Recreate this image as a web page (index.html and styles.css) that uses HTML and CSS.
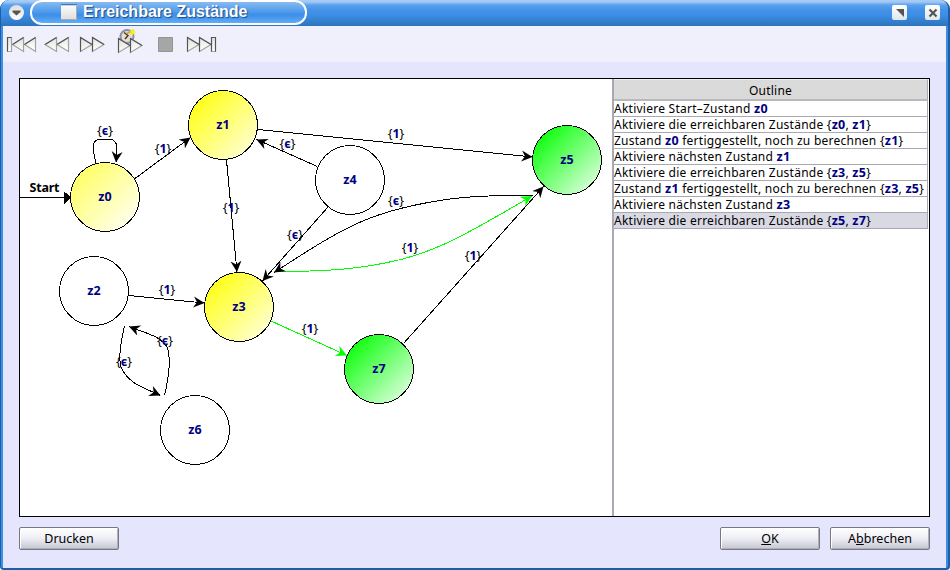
FILE: index.html
```html
<!DOCTYPE html>
<html lang="de">
<head>
<meta charset="utf-8">
<title>Erreichbare Zustände</title>
<link rel="stylesheet" href="styles.css">
</head>
<body>
<div class="window">
  <header class="titlebar">
    <span class="menu-button"><svg width="15" height="15"><path d="M3.5 5.5h8v1.5l-4 3.5-4-3.5z" fill="#555"/></svg></span>
    <div class="title-tab">
      <svg class="doc-icon" width="17" height="16"><defs><linearGradient id="doc" x2="0" y2="1"><stop stop-color="#fff"/><stop offset="1" stop-color="#ddd"/></linearGradient></defs><path d="M0 0h16v16H0z" fill="url(#doc)"/><path d="M0 0h16v1H0z" fill="#4b72ae"/><path d="M0 1h16v1H0z" fill="#c8d4e6"/><path d="M15.5 2v13.5H0" fill="none" stroke="#aaa"/></svg>
      <span class="title">Erreichbare Zustände</span>
    </div>
    <span class="win-button"><svg width="15" height="15"><path d="M4 4h8v8z" fill="#555"/></svg></span>
    <span class="win-button last"><svg width="15" height="15"><path d="M4.5 4.5l7 7M11.5 4.5l-7 7" stroke="#555" stroke-width="2.2"/></svg></span>
  </header>
  <main class="content">
    <div class="toolbar">
      <svg width="220" height="36" viewBox="0 26 220 36">
        <defs><linearGradient id="tri" x2="0.3" y2="1"><stop stop-color="#dedfd8"/><stop offset="1" stop-color="#fff"/></linearGradient></defs>
        <g fill="url(#tri)" stroke="#a2a2a2" stroke-width="1.2">
          <path d="M7.5 37.5h4v14h-4z"/><path d="M23.5 37.5v14l-11-7zM35.5 37.5v14l-11-7z"/>
          <path d="M56.500 37.500v14l-11.500-7zM68.500 37.500v14l-11.500-7z"/>
          <path d="M80.500 37.500v14l11.500-7zM92.500 37.500v14l11.500-7z"/>
        </g>
        <g fill="none" stroke="#555" stroke-width="1.1">
          <path d="M7.500 51.500v-14h4M12.500 44.500l11-7M24.500 44.500l11-7M45 44.500l11.500-7M57 44.500l11.500-7M80.500 51.500v-14l11.500 7M92.500 51.500v-14l11.500 7"/>
        </g>
        <circle cx="127" cy="36.500" r="6.500" fill="#e2dfd5" stroke="#8c8caa" stroke-width="2"/>
        <path d="M124 32.500l4 3-3 3.500" fill="none" stroke="#403820" stroke-width="1.4"/>
        <path d="M126.500 33.500l5-2" stroke="#d4a020" stroke-width="1.500"/>
        <path d="M132.500 29v6.500M129.500 32h6M130.500 30l4 4M134.500 30l-4 4" stroke="#f3ed20" stroke-width="1.200"/>
        <g fill="url(#tri)" stroke="#a2a2a2" stroke-width="1.2">
          <path d="M118.500 38.500v14l11.500-7zM130.500 38.500v14l11.500-7z"/>
          <path d="M187.500 37.500v14l11.500-7zM199.500 37.500v14l11.500-7z"/><path d="M211.500 37.500h4v14h-4z"/>
        </g>
        <g fill="none" stroke="#555" stroke-width="1.1"><path d="M118.500 52.500v-14l11.500 7M130.500 52.500v-14l11.500 7M187.500 51.500v-14l11.500 7M199.500 51.500v-14l11.500 7M211.500 51.500v-14h4v14"/></g>
        <path d="M158.500 37.500h14v14h-14z" fill="#a6a6a6" stroke="#949494"/>
      </svg>
    </div>
    <div class="split">
      <svg class="graph" width="592" height="437" viewBox="20 79 592 437">
        <defs>
          <linearGradient id="y0" x2="1" y2="1"><stop offset=".1" stop-color="#ffff60"/><stop offset=".9" stop-color="#fffff0"/></linearGradient>
          <linearGradient id="y1" x2="1" y2="1"><stop offset=".1" stop-color="#ffff10"/><stop offset=".95" stop-color="#ffffe0"/></linearGradient>
          <linearGradient id="gr" x2="1" y2="1"><stop offset=".1" stop-color="#08ff08"/><stop offset=".95" stop-color="#e8ffe8"/></linearGradient>
          <marker id="ab" markerUnits="userSpaceOnUse" markerWidth="13" markerHeight="13" refX="11" refY="5.5" orient="auto"><path d="M11 5.500L0 0l3.500 5.500L0 11z"/></marker>
          <marker id="ag" markerUnits="userSpaceOnUse" markerWidth="13" markerHeight="13" refX="11" refY="5.5" orient="auto"><path d="M11 5.500L0 0l3.500 5.500L0 11z" fill="#0f0"/></marker>
        </defs>
        <g class="nodes">
          <circle cx="105" cy="197" r="34.500" fill="url(#y0)"/>
          <circle cx="223" cy="125" r="34.500" fill="url(#y1)"/>
          <circle cx="94" cy="291" r="34.500" fill="#fff"/>
          <circle cx="239" cy="307" r="34.500" fill="url(#y1)"/>
          <circle cx="350" cy="180" r="34.500" fill="#fff"/>
          <circle cx="567" cy="160" r="34.500" fill="url(#gr)"/>
          <circle cx="195" cy="430" r="34.500" fill="#fff"/>
          <circle cx="379" cy="369" r="34.500" fill="url(#gr)"/>
        </g>
        <g class="edges green">
          <path d="M271 321L347 355.500"/>
          <path d="M274 271.500C320 271.500 350 270 385 263C435 254 470 232 532 196"/>
        </g>
        <g class="edges">
          <path class="plain" d="M20 197.500H66"/><path class="head" d="M64 192l6.500 5.500-6.500 6z"/>
          <path d="M96 163C92 148 92 140.500 99 139.500H111C118 140.500 117.500 148 116 162.500"/>
          <path d="M135 178.500L190.500 137.500"/>
          <path d="M258 129.500L532.500 157"/>
          <path d="M317.500 166.500L256.500 139.500"/>
          <path d="M226.500 160L237 272"/>
          <path d="M328 207L262.500 281"/>
          <path d="M533 195.500C500 195.500 470 195.500 440 200.500C405 206 375 214 350 227C326 238 300 256 274 272.500"/>
          <path d="M403.500 343.500L543.500 186.500"/>
          <path d="M129 295.500L204.500 303"/>
          <path d="M124.500 326C120 345 117 363 123 371C131 384 142 387 160.500 395.500"/>
          <path d="M164.500 395.500C167 385 172 360 167 347C160 336 148 334 129 326.500"/>
        </g>
        <g class="labels">
          <text x="105" y="201">z0</text><text x="223" y="129">z1</text><text x="94" y="295">z2</text><text x="239" y="311">z3</text>
          <text x="350" y="184">z4</text><text x="567" y="164">z5</text><text x="195" y="434">z6</text><text x="379" y="373">z7</text>
          <text x="44.500" y="192" class="start" textLength="30">Start</text>
          <text x="105" y="135"><tspan class="b">{</tspan>ϵ<tspan class="b">}</tspan></text>
          <text x="287.500" y="148"><tspan class="b">{</tspan>ϵ<tspan class="b">}</tspan></text>
          <text x="396" y="205"><tspan class="b">{</tspan>ϵ<tspan class="b">}</tspan></text>
          <text x="295" y="239"><tspan class="b">{</tspan>ϵ<tspan class="b">}</tspan></text>
          <text x="165" y="345"><tspan class="b">{</tspan>ϵ<tspan class="b">}</tspan></text>
          <text x="124" y="366"><tspan class="b">{</tspan>ϵ<tspan class="b">}</tspan></text>
          <text x="163" y="153"><tspan class="b">{</tspan>1<tspan class="b">}</tspan></text>
          <text x="231" y="212"><tspan class="b">{</tspan>1<tspan class="b">}</tspan></text>
          <text x="396" y="138"><tspan class="b">{</tspan>1<tspan class="b">}</tspan></text>
          <text x="410" y="252"><tspan class="b">{</tspan>1<tspan class="b">}</tspan></text>
          <text x="473" y="260"><tspan class="b">{</tspan>1<tspan class="b">}</tspan></text>
          <text x="167" y="294"><tspan class="b">{</tspan>1<tspan class="b">}</tspan></text>
          <text x="310" y="333"><tspan class="b">{</tspan>1<tspan class="b">}</tspan></text>
        </g>
      </svg>
      <section class="outline">
        <div class="head-cell">Outline</div>
        <div class="row">Aktiviere Start–Zustand <b>z0</b></div>
        <div class="row">Aktiviere die erreichbaren Zustände {<b>z0</b>, <b>z1</b>}</div>
        <div class="row">Zustand <b>z0</b> fertiggestellt, noch zu berechnen {<b>z1</b>}</div>
        <div class="row">Aktiviere nächsten Zustand <b>z1</b></div>
        <div class="row">Aktiviere die erreichbaren Zustände {<b>z3</b>, <b>z5</b>}</div>
        <div class="row">Zustand <b>z1</b> fertiggestellt, noch zu berechnen {<b>z3</b>, <b>z5</b>}</div>
        <div class="row">Aktiviere nächsten Zustand <b>z3</b></div>
        <div class="row selected">Aktiviere die erreichbaren Zustände {<b>z5</b>, <b>z7</b>}</div>
      </section>
    </div>
    <footer class="actions">
      <button class="btn first">Drucken</button>
      <button class="btn"><u>O</u>K</button>
      <button class="btn">A<u>b</u>brechen</button>
    </footer>
  </main>
</div>
</body>
</html>
```
FILE: styles.css
```css
* { box-sizing: border-box; }
body { margin: 0; background: #fff; font-family: "Noto Sans", "DejaVu Sans", sans-serif; }
.window {
  width: 950px; height: 570px; display: flex; flex-direction: column;
  background: #3c8ee8; border-radius: 9px 9px 4px 4px; overflow: hidden;
  border-left: 1px solid #1e5ea4; border-right: 2px solid #1e5ea4; border-bottom: 2px solid #1e5ea4;
}
.titlebar {
  height: 26px; flex: none; margin-left: -1px; margin-right: -2px; padding: 0 10px 0 9px; display: flex; align-items: flex-start;
  background: linear-gradient(#a9cdf5 0, #a0c8f5 2px, #5ba1ec 5px, #4492e8 10px, #3d8ee6 15px, #2e75bf 25px);
}
.menu-button { width: 15px; height: 15px; margin-top: 5px; border-radius: 50%; background: linear-gradient(#ddd, #fff); display: flex; }
.title-tab {
  width: 277px; height: 25px; margin-left: 6px; padding: 3px 0 0 29px; display: flex; align-items: flex-start;
  border: 2px solid #fff; border-radius: 12px;
  background: linear-gradient(#8abaf0 0, #5ca4ee 7px, #3c8ee8 13px, #62acf8 21px);
}
.doc-icon { margin-top: -1px; }
.title {
  margin-left: 5px; color: #fff; font: bold 16px/18px "Liberation Sans", Arial, sans-serif; margin-top: -2px;
  text-shadow: 1px 1px 1px #1b4a86; white-space: nowrap;
}
.win-button { width: 15px; height: 15px; margin: 5px 0 0 auto; border-radius: 2px; background: linear-gradient(#fff, #dfe6ee); display: flex; }
.win-button.last { margin-left: 18px; }
.content { flex: 1; margin: 0 2px; display: flex; flex-direction: column; background: #e5e5fd; }
.toolbar { height: 36px; flex: none; background: #f0effc; display: flex; }
.toolbar svg { margin-left: -3px; }
.split { margin: 16px 16px 0; height: 439px; flex: none; display: flex; background: #fff; border: 1px solid #000; }
.graph { flex: none; display: block; }
.nodes circle, .edges path { stroke: #000; stroke-width: 1; shape-rendering: crispEdges; }
.edges path { fill: none; marker-end: url(#ab); }
.edges .plain { marker-end: none; }
.edges .head { fill: #000; marker-end: none; }
.green path { stroke: #0f0; marker-end: url(#ag); }
.labels text { font-weight: bold; font-size: 12.500px; fill: #000080; text-anchor: middle; }
.labels .b { font-weight: normal; fill: #000; }
.labels .start { fill: #000; }
.outline { flex: 1; border-left: 2px solid #a9a9b3; padding-right: 1px; color: #000; font-size: 12px; letter-spacing: .25px; }
.head-cell {
  height: 22px; padding-top: 2px; text-align: center; line-height: 18px;
  background: #dadada; border-top: 1px solid #eee; border-bottom: 2px solid #b9b9bc; border-right: 1px solid #a9a9b3;
}
.row { height: 16px; line-height: 15px; border-bottom: 1px solid #a9a9b3; border-right: 1px solid #a9a9b3; white-space: nowrap; }
.row b { color: #000080; font-size: 12.500px; line-height: 1; }
.selected { background: #d9d9e4; }
.actions { display: flex; gap: 10px; margin: 10px 16px 0; }
.btn {
  width: 100px; height: 23px; padding: 0 0 1px; font: 12.500px/19px "Noto Sans", sans-serif; color: #000;
  border: 1px solid #77777d; border-radius: 2px; background: linear-gradient(#fff, #ededf5 50%, #c5c5d2);
  box-shadow: inset 1px 1px #fff, inset -1px -1px #b0b0ba;
}
.first { margin-right: auto; }
```
